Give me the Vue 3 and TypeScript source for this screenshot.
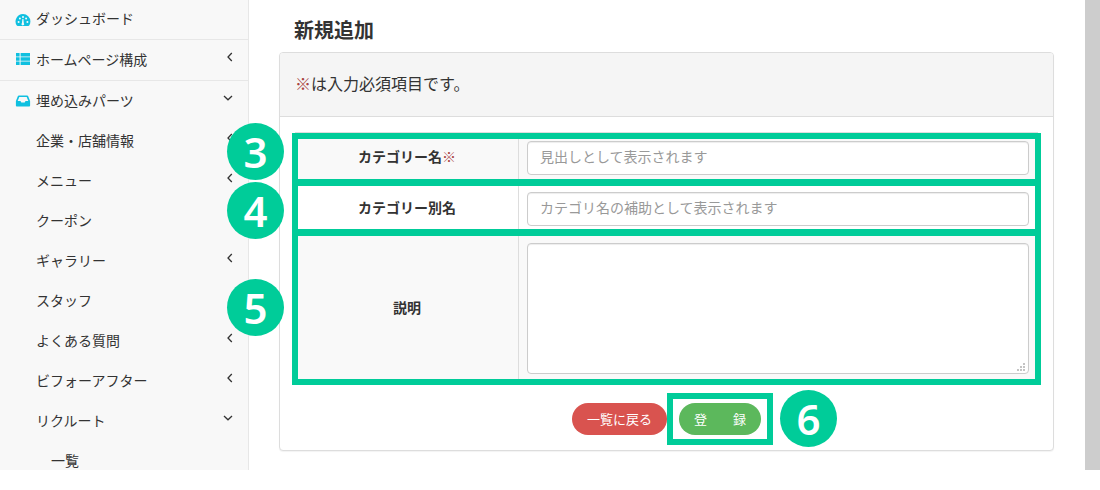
<script setup lang="ts">
interface NavItem {
  label: string
  icon?: 'gauge' | 'list' | 'inbox'
  arrow?: 'left' | 'down'
  level?: number
  divided?: boolean
}

const navItems: NavItem[] = [
  { label: 'ダッシュボード', icon: 'gauge', divided: true },
  { label: 'ホームページ構成', icon: 'list', arrow: 'left', divided: true },
  { label: '埋め込みパーツ', icon: 'inbox', arrow: 'down' },
  { label: '企業・店舗情報', arrow: 'left' },
  { label: 'メニュー', arrow: 'left' },
  { label: 'クーポン' },
  { label: 'ギャラリー', arrow: 'left' },
  { label: 'スタッフ' },
  { label: 'よくある質問', arrow: 'left' },
  { label: 'ビフォーアフター', arrow: 'left' },
  { label: 'リクルート', arrow: 'down' },
  { label: '一覧', level: 2 }
]

const frames = ['frame-3', 'frame-4', 'frame-5', 'frame-6']
const marks = [
  { num: 3, cls: 'mark-3' },
  { num: 4, cls: 'mark-4' },
  { num: 5, cls: 'mark-5' },
  { num: 6, cls: 'mark-6' }
]
</script>

<template>
  <div class="page">
    <aside class="sidebar">
      <div
        v-for="item in navItems"
        :key="item.label"
        class="nav-item"
        :class="{ divided: item.divided, sub: !item.icon && item.level !== 2, sub2: item.level === 2 }"
      >
        <svg v-if="item.icon === 'gauge'" class="nav-icon icon-gauge" viewBox="0 0 16 14">
          <path
            fill-rule="evenodd"
            d="M8 1a7.4 7.4 0 0 1 7.4 7.4c0 1.5-.4 2.9-1.2 4.1-.2.3-.5.4-.8.4H2.6c-.3 0-.6-.1-.8-.4A7.4 7.4 0 0 1 8 1zM3.6 8a1 1 0 1 0 0 2 1 1 0 0 0 0-2zm1.3-3.6a1 1 0 1 0 0 2 1 1 0 0 0 0-2zM8 3a1 1 0 1 0 0 2 1 1 0 0 0 0-2zm3.1 1.4a1 1 0 1 0 0 2 1 1 0 0 0 0-2zm1.3 3.6a1 1 0 1 0 0 2 1 1 0 0 0 0-2zM7.4 6l-.5 4.2a1.3 1.3 0 1 0 1.9.1L8.4 6z"
          />
        </svg>
        <svg v-else-if="item.icon === 'list'" class="nav-icon" viewBox="0 0 16 14">
          <path d="M1 1h3.6v3.4H1zM5.6 1H15v3.4H5.6zM1 5.3h3.6v3.4H1zM5.6 5.3H15v3.4H5.6zM1 9.6h3.6V13H1zM5.6 9.6H15V13H5.6z" />
        </svg>
        <svg v-else-if="item.icon === 'inbox'" class="nav-icon icon-inbox" viewBox="0 0 16 14">
          <path
            fill-rule="evenodd"
            d="M3.8 1.5h8.4c.4 0 .7.2.9.6L15 6.8c.1.2.1.4.1.6v4c0 .7-.5 1.2-1.2 1.2H2.1c-.7 0-1.2-.5-1.2-1.2v-4c0-.2 0-.4.1-.6l1.9-4.7c.2-.4.5-.6 1-.6zM4.3 3l-1.6 4h2.8l.8 1.6h3.4l.8-1.6h2.8L11.7 3z"
          />
        </svg>
        <span class="nav-label">{{ item.label }}</span>
        <svg v-if="item.arrow === 'left'" class="arrow arrow-left" viewBox="0 0 6 10">
          <path d="M4.8 1 1 5l3.8 4" />
        </svg>
        <svg v-else-if="item.arrow === 'down'" class="arrow arrow-down" viewBox="0 0 10 6">
          <path d="m1 1 4 3.8L9 1" />
        </svg>
      </div>
    </aside>

    <main class="content">
      <h1 class="title">新規追加</h1>
      <section class="card">
        <header class="card-head"><span class="req">※</span>は入力必須項目です。</header>
        <div class="card-body">
          <table class="form-table">
            <tbody>
              <tr class="odd">
                <th>カテゴリー名<span class="req">※</span></th>
                <td><input class="field" type="text" placeholder="見出しとして表示されます" /></td>
              </tr>
              <tr>
                <th>カテゴリー別名</th>
                <td><input class="field" type="text" placeholder="カテゴリ名の補助として表示されます" /></td>
              </tr>
              <tr class="odd">
                <th>説明</th>
                <td>
                  <div class="area-wrap">
                    <textarea class="field area"></textarea>
                    <svg class="grip" viewBox="0 0 8 8">
                      <path d="M6 0h2v2H6zM3 3h2v2H3zM6 3h2v2H6zM0 6h2v2H0zM3 6h2v2H3zM6 6h2v2H6z" />
                    </svg>
                  </div>
                </td>
              </tr>
            </tbody>
          </table>
          <div class="actions">
            <button class="btn btn-back" type="button">一覧に戻る</button>
            <button class="btn btn-save" type="button">登　　録</button>
          </div>
        </div>
      </section>
    </main>

    <div class="scrollbar"></div>

    <div v-for="f in frames" :key="f" class="frame" :class="f"></div>
    <div v-for="m in marks" :key="m.num" class="mark" :class="m.cls">{{ m.num }}</div>
  </div>
</template>

<style>
html,
body {
  margin: 0;
  background: #fff;
}
</style>

<style scoped>
.page {
  position: relative;
  display: flex;
  width: 1100px;
  height: 470px;
  overflow: hidden;
  background: #fff;
  color: #333;
  font-family: "Noto Sans CJK JP", "Noto Sans", sans-serif;
  font-size: 14px;
}

.sidebar {
  flex: 0 0 248px;
  background: #f8f8f8;
  border-right: 1px solid #e7e7e7;
}

.nav-item {
  position: relative;
  display: flex;
  align-items: center;
  height: 40px;
  padding: 0 0 2px 15px;
  box-sizing: border-box;
  line-height: 20px;
}

.nav-item.divided {
  height: 41px;
  border-bottom: 1px solid #e7e7e7;
}

.nav-item.divided:first-child {
  height: 40px;
  padding-bottom: 4px;
}

.nav-item.sub {
  padding-left: 36px;
}

.nav-item.sub2 {
  padding-left: 51px;
}

.nav-icon {
  flex: none;
  width: 16px;
  height: 14px;
  margin-right: 5px;
  fill: #10c0e0;
}

.icon-gauge {
  margin-top: 4px;
}

.icon-inbox {
  margin-top: 2px;
}

.nav-label {
  color: #333;
}

.arrow {
  position: absolute;
  fill: none;
  stroke: #333;
  stroke-width: 1.3;
}

.arrow-left {
  left: 227px;
  top: 12px;
  width: 6px;
  height: 10px;
}

.arrow-down {
  left: 223px;
  top: 14px;
  width: 10px;
  height: 6px;
}

.content {
  flex: 1;
  min-width: 0;
  padding: 19px 31px 0 30px;
}

.title {
  margin: 0 0 11px;
  padding-left: 15px;
  font-size: 20px;
  line-height: 22px;
  font-weight: 700;
  color: #333;
}

.card {
  border: 1px solid #ddd;
  border-radius: 4px;
  background: #fff;
  box-shadow: 0 1px 1px rgba(0, 0, 0, 0.05);
}

.card-head {
  padding: 19px 15px 21px;
  font-size: 16px;
  line-height: 23px;
  background: #f5f5f5;
  border-bottom: 1px solid #ddd;
  border-radius: 3px 3px 0 0;
}

.req {
  color: #a94442;
}

.card-body {
  padding: 15px;
}

.form-table {
  width: 100%;
  border-collapse: collapse;
  table-layout: fixed;
}

.form-table th,
.form-table td {
  border: 1px solid #ddd;
  padding: 8px;
  vertical-align: middle;
}

.form-table th {
  width: 206px;
  padding: 6px 8px 10px;
  font-size: 14px;
  font-weight: 700;
  text-align: center;
}

.form-table tr.odd th,
.form-table tr.odd td {
  background: #f9f9f9;
}

.field {
  display: block;
  width: 100%;
  height: 34px;
  padding: 4px 12px 8px;
  box-sizing: border-box;
  border: 1px solid #ccc;
  border-radius: 4px;
  background: #fff;
  box-shadow: inset 0 1px 1px rgba(0, 0, 0, 0.075);
  color: #555;
  font-family: inherit;
  font-size: 14px;
  line-height: 20px;
  outline: none;
}

.field::placeholder {
  color: #999;
  opacity: 1;
}

.area-wrap {
  position: relative;
}

.area {
  height: 131px;
  resize: none;
}

.grip {
  position: absolute;
  right: 4px;
  bottom: 3px;
  width: 8px;
  height: 8px;
  fill: #c4c4c4;
}

.actions {
  display: flex;
  justify-content: center;
  gap: 12px;
  margin-top: 20px;
}

.btn {
  height: 32px;
  padding: 0 15px;
  border: 0;
  border-radius: 16px;
  color: #fff;
  font-family: inherit;
  font-size: 13px;
  line-height: 32px;
}

.btn-back {
  background: #d9534f;
}

.btn-save {
  background: #5cb85c;
}

.scrollbar {
  flex: 0 0 15px;
  background: #cdcdcd;
}

/* annotation overlays */
.frame {
  position: absolute;
  box-sizing: border-box;
  border: 6px solid #00cc99;
}

.frame-3 {
  left: 292px;
  top: 133px;
  width: 749px;
  height: 52px;
}

.frame-4 {
  left: 292px;
  top: 180px;
  width: 749px;
  height: 55px;
}

.frame-5 {
  left: 292px;
  top: 230px;
  width: 749px;
  height: 155px;
}

.frame-6 {
  left: 667px;
  top: 393px;
  width: 106px;
  height: 52px;
}

.mark {
  position: absolute;
  width: 57px;
  height: 57px;
  border-radius: 50%;
  background: #00cc99;
  color: #fff;
  font-family: "Noto Sans", sans-serif;
  font-size: 42px;
  font-weight: 600;
  line-height: 57px;
  text-align: center;
}

.mark-3 {
  left: 227px;
  top: 123px;
}

.mark-4 {
  left: 227px;
  top: 182px;
}

.mark-5 {
  left: 227px;
  top: 279px;
}

.mark-6 {
  left: 780px;
  top: 390px;
}
</style>
